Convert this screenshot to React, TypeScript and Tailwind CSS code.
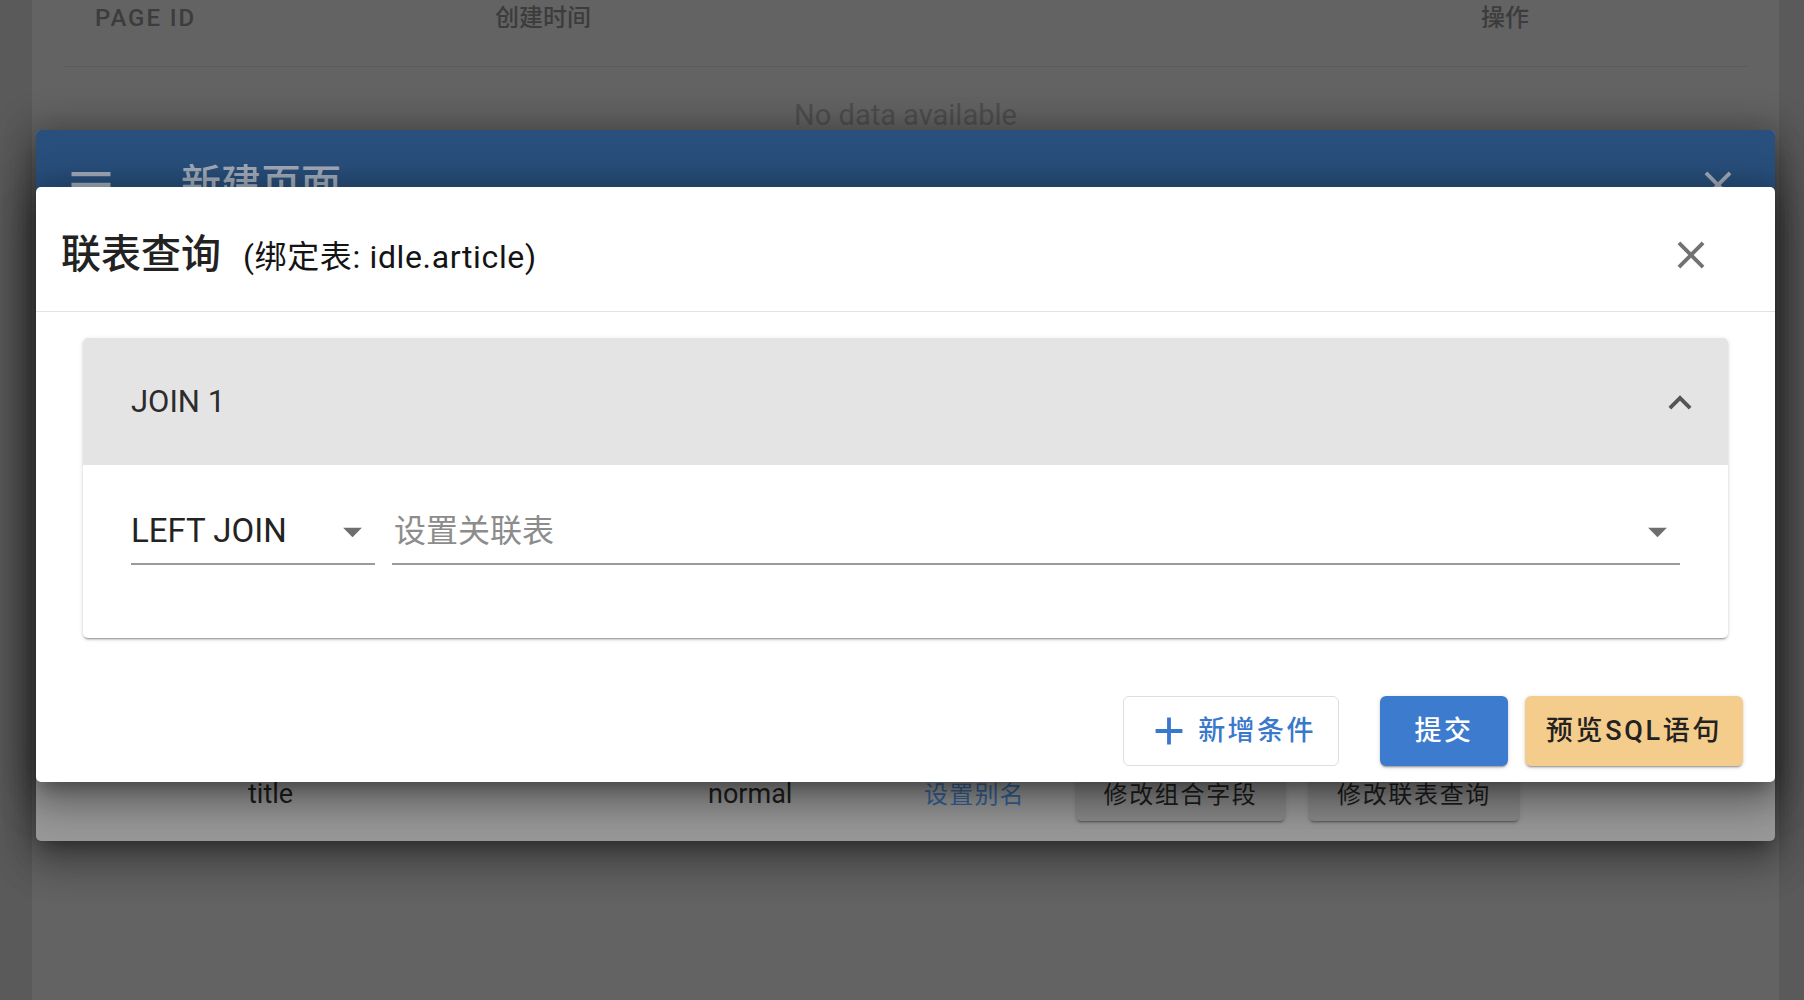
import React from 'react'

const paths = {
  close: 'M19 6.41L17.59 5 12 10.59 6.41 5 5 6.41 10.59 12 5 17.59 6.41 19 12 13.41 17.59 19 19 17.59 13.41 12z',
  expandLess: 'M12 8l-6 6 1.41 1.41L12 10.83l4.59 4.58L18 14z',
  dropDown: 'M7 10l5 5 5-5z',
  plus: 'M19 13h-6v6h-2v-6H5v-2h6V5h2v6h6v2z',
  menu: 'M3 18h18v-2H3v2zm0-5h18v-2H3v2zm0-5h18V6H3v2z',
}

function Icon({ d, className }: { d: string; className?: string }) {
  return (
    <svg viewBox="0 0 24 24" fill="currentColor" className={className}>
      <path d={d} />
    </svg>
  )
}

const dialogShadow =
  'shadow-[0_11px_15px_-7px_rgba(0,0,0,0.25),0_24px_38px_3px_rgba(0,0,0,0.18),0_9px_46px_8px_rgba(0,0,0,0.18),0_0_30px_6px_rgba(0,0,0,0.15)]'
const btnShadow =
  'shadow-[0_3px_1px_-2px_rgba(0,0,0,0.2),0_2px_2px_0_rgba(0,0,0,0.14),0_1px_5px_0_rgba(0,0,0,0.12)]'

export default function App() {
  return (
    <div className="relative h-[1000px] w-full overflow-hidden bg-[#5a5a5a] font-['Roboto','Noto_Sans_CJK_SC',sans-serif]">
      {/* page underneath, dimmed by both overlays */}
      <div className="ml-[32px] mr-[25px] h-full bg-[#636363] px-[31px]">
        <div className="grid h-[67px] grid-cols-[400px_986px_1fr] border-b border-[#5a5a5a] text-[24px] font-medium text-[#3c3c3c]">
          <div className="pl-[32px] leading-[36px] tracking-[0.08em]">PAGE ID</div>
          <div className="pl-[32px] leading-[36px]">创建时间</div>
          <div className="pl-[32px] leading-[36px]">操作</div>
        </div>
        <div className="pt-[30px] text-center text-[29px] leading-[36px] text-[#4e4e4e]">No data available</div>
      </div>

      {/* back dialog: 新建页面 */}
      <div className={`absolute left-[36px] right-[29px] top-[130px] flex h-[711px] flex-col overflow-hidden rounded-[5px] bg-[#999999] ${dialogShadow}`}>
        <div className="flex h-[110px] shrink-0 items-center bg-[#29507d] pl-[29px] pr-[34px] text-[#a4adbb]">
          <Icon d={paths.menu} className="h-[52px] w-[52px]" />
          <span className="ml-[64px] text-[40px] font-medium">新建页面</span>
          <div className="flex-1" />
          <Icon d={paths.close} className="h-[46px] w-[46px]" />
        </div>
        <div className="flex-1" />
        <div className="mb-[20px] flex h-[53px] items-center text-[#1f1f1f]">
          <span className="ml-[212px] w-[460px] text-[27px]">title</span>
          <span className="w-[216px] text-[27px]">normal</span>
          <span className="w-[152px] text-[24px] tracking-[0.05em] text-[#36659a]">设置别名</span>
          <button className={`flex h-[53px] w-[209px] items-center justify-center rounded-[5px] bg-[#8a8a8a] text-[24px] tracking-[0.07em] ${btnShadow}`}>
            修改组合字段
          </button>
          <button className={`ml-[24px] flex h-[53px] w-[210px] items-center justify-center rounded-[5px] bg-[#8a8a8a] text-[24px] tracking-[0.07em] ${btnShadow}`}>
            修改联表查询
          </button>
        </div>
      </div>

      {/* front dialog: 联表查询 */}
      <div className={`absolute left-[36px] right-[29px] top-[187px] flex flex-col rounded-[5px] bg-white ${dialogShadow}`}>
        <div className="flex h-[125px] items-center border-b border-[#e2e2e2] pl-[25px] pr-[61px] pt-[12px]">
          <div className="flex flex-1 items-baseline">
            <span className="text-[40px] font-medium text-[#222222]">联表查询</span>
            <span className="ml-[22px] text-[32px] tracking-[0.02em] text-[#141414]">(绑定表: idle.article)</span>
          </div>
          <Icon d={paths.close} className="h-[46px] w-[46px] text-[#727272]" />
        </div>

        <div className="px-[47px] pt-[26px]">
          <div className={`overflow-hidden rounded-[5px] bg-white ${btnShadow}`}>
            <div className="flex h-[127px] items-center bg-[#e4e4e4] pl-[48px] pr-[25px] pt-[2px]">
              <span className="flex-1 text-[31px] text-[#2c2c2c]">JOIN 1</span>
              <Icon d={paths.expandLess} className="h-[46px] w-[46px] text-[#555555]" />
            </div>
            <div className="flex gap-[17px] px-[48px] pb-[73px] pt-[34px]">
              <div className="flex h-[66px] w-[244px] items-center border-b-2 border-[#9a9a9a]">
                <span className="flex-1 text-[33px] text-[#232323]">LEFT JOIN</span>
                <Icon d={paths.dropDown} className="h-[45px] w-[45px] text-[#6e6e6e]" />
              </div>
              <div className="flex h-[66px] flex-1 items-center border-b-2 border-[#9a9a9a]">
                <span className="flex-1 pl-[2px] text-[32px] text-[#8c8c8c]">设置关联表</span>
                <Icon d={paths.dropDown} className="h-[45px] w-[45px] text-[#6e6e6e]" />
              </div>
            </div>
          </div>
        </div>

        <div className="flex justify-end pb-[16px] pr-[32px] pt-[58px]">
          <button className="flex h-[70px] w-[216px] items-center justify-center rounded-[6px] border border-[#dedede] bg-white text-[27px] font-medium tracking-[0.09em] text-[#3a78cc]">
            <Icon d={paths.plus} className="mr-[6px] h-[46px] w-[46px]" />
            新增条件
          </button>
          <button className={`ml-[41px] flex h-[70px] w-[128px] items-center justify-center rounded-[6px] bg-[#3d7bcf] text-[27px] font-medium tracking-[0.09em] text-white ${btnShadow}`}>
            提交
          </button>
          <button className={`ml-[17px] flex h-[70px] w-[218px] items-center justify-center rounded-[6px] bg-[#f4cc8b] text-[27px] font-medium tracking-[0.1em] text-[#222222] ${btnShadow}`}>
            预览SQL语句
          </button>
        </div>
      </div>
    </div>
  )
}
